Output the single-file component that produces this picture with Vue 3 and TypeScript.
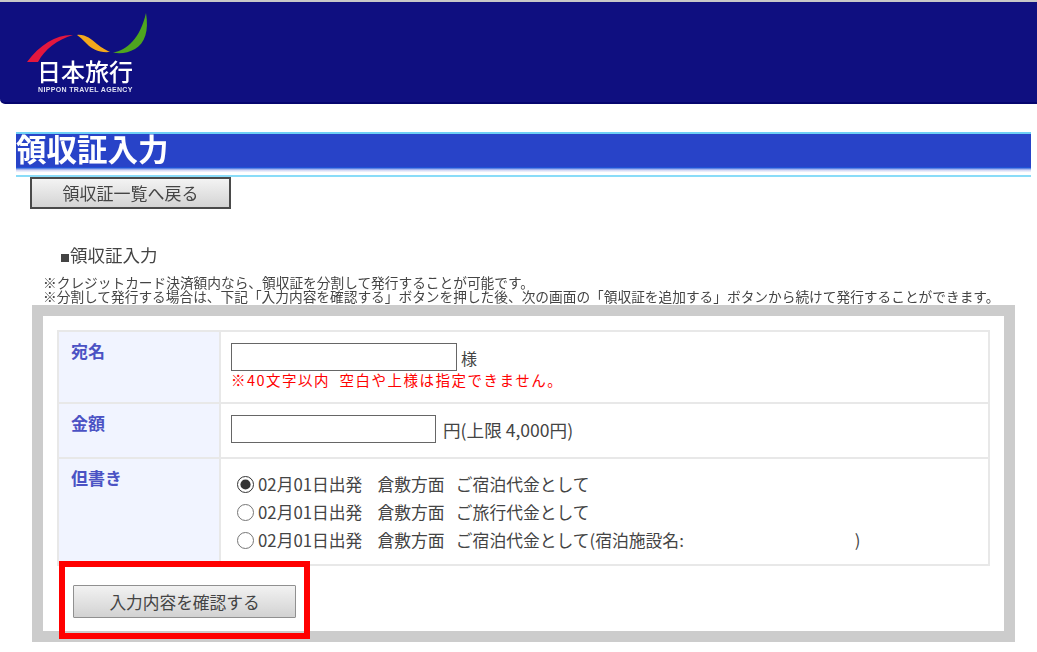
<script setup lang="ts">
interface Option { text: string; checked: boolean }
const options: Option[] = [
  { text: '02月01日出発    倉敷方面   ご宿泊代金として', checked: true },
  { text: '02月01日出発    倉敷方面   ご旅行代金として', checked: false },
  { text: '02月01日出発    倉敷方面   ご宿泊代金として(宿泊施設名:', checked: false },
]
</script>

<template>
  <div class="page">
    <header class="hero">
      <div class="logo">
        <svg class="logo-mark" width="130" height="62" viewBox="0 0 130 62">
          <path d="M0 49 C13 31 31 21 46 22 C30 27 18 36 11 49 Z" fill="#e3173e" />
          <path d="M50 22 C58 21 64 26 70 31 C75 35 79 37 83 39 C72 40 65 36 60 31 C56 27 53 24 50 22 Z" fill="#f3a81c" />
          <path d="M86 39.5 C100 37 113 26 119 0 C122 18 118 30 108 36 C101 40 93 41 86 39.5 Z" fill="#4ea51f" />
        </svg>
        <div class="logo-name">日本旅行</div>
        <div class="logo-sub">NIPPON TRAVEL AGENCY</div>
      </div>
    </header>

    <h1 class="title">領収証入力</h1>
    <button class="back" type="button">領収証一覧へ戻る</button>

    <h2 class="section"><span class="bullet">■</span>領収証入力</h2>
    <p class="notes">※クレジットカード決済額内なら、領収証を分割して発行することが可能です。<br />※分割して発行する場合は、下記「入力内容を確認する」ボタンを押した後、次の画面の「領収証を追加する」ボタンから続けて発行することができます。</p>

    <div class="box">
      <table class="form">
        <tbody>
          <tr class="r1">
            <th>宛名</th>
            <td>
              <div class="line"><input class="name" type="text" /><span class="suffix">様</span></div>
              <div class="warn">※40文字以内&nbsp;&nbsp;空白や上様は指定できません。</div>
            </td>
          </tr>
          <tr class="r2">
            <th>金額</th>
            <td>
              <div class="line"><input class="amount" type="text" /><span class="limit">円(上限 4,000円)</span></div>
            </td>
          </tr>
          <tr class="r3">
            <th>但書き</th>
            <td>
              <label v-for="(o, i) in options" :key="i" class="opt">
                <input type="radio" name="memo" :checked="o.checked" />
                <span>{{ o.text }}</span>
                <span v-if="i === 2" class="close">)</span>
              </label>
            </td>
          </tr>
        </tbody>
      </table>
      <button class="confirm" type="button">入力内容を確認する</button>
      <div class="mark"></div>
    </div>
  </div>
</template>

<style>
html, body { margin: 0; background: #fff; }
</style>

<style scoped>
.page {
  width: 1037px;
  height: 652px;
  overflow: hidden;
  position: relative;
  color: #444;
  font-family: "Noto Sans CJK JP", "Noto Sans", sans-serif;
  border-top: 2px solid #c8c8c8;
  box-sizing: border-box;
  filter: blur(0.4px);
}
.hero {
  height: 102px;
  box-sizing: border-box;
  background: #0f0f80;
  border-bottom: 2px solid #05056e;
  border-radius: 0 0 0 5px;
  padding: 11px 0 0 27px;
}
.logo { position: relative; width: 130px; height: 85px; color: #fff; }
.logo-mark { display: block; }
.logo-name {
  position: absolute;
  left: 10px;
  top: 43px;
  font-size: 24px;
  line-height: 30px;
  font-weight: 500;
  letter-spacing: 0;
  white-space: nowrap;
}
.logo-sub {
  position: absolute;
  left: 11px;
  top: 73px;
  font-family: "Liberation Sans", sans-serif;
  font-size: 7px;
  line-height: 7px;
  font-weight: 700;
  letter-spacing: 0.35px;
  white-space: nowrap;
  color: #dfe0f2;
}
.title {
  box-sizing: border-box;
  margin: 28px 6px 0 16px;
  height: 45px;
  padding: 0;
  background: linear-gradient(#2843c8 0 80%, #1e55d8 82%, #cfd4f4 88%, #fff 94%);
  border-top: 2px solid #6fd0f5;
  border-bottom: 2px solid #8adcf8;
  color: #fff;
  font-size: 30.5px;
  line-height: 28px;
  font-weight: 700;
}
.back {
  display: block;
  box-sizing: border-box;
  margin: 0 0 0 30px;
  width: 201px;
  height: 32px;
  background: linear-gradient(#f3f3f3, #d4d4d4);
  border: 2px solid #4a4a4a;
  border-radius: 0;
  color: #444;
  font: 400 17px/26px "Noto Sans CJK JP", sans-serif;
  padding: 0;
}
.section {
  margin: 35px 0 0 60px;
  font-size: 17.5px;
  line-height: 22px;
  font-weight: 400;
  color: #444;
}
.bullet { font-size: 10px; }
.notes {
  margin: 6px 0 2px 43px;
  font-size: 13.7px;
  line-height: 14px;
  white-space: nowrap;
  color: #444;
}
.box {
  position: relative;
  box-sizing: border-box;
  margin: 0 0 0 32px;
  width: 983px;
  height: 337px;
  border: 11px solid #cccccc;
  padding: 14px 14px 0;
  background: #fff;
}
.form {
  border-collapse: collapse;
  width: 933px;
  table-layout: fixed;
}
.form th, .form td {
  border: 2px solid #e8e8e8;
  vertical-align: top;
  padding: 0;
}
.form th {
  width: 162px;
  box-sizing: border-box;
  background: #f1f4ff;
  color: #4b52c4;
  font-size: 17px;
  line-height: 22px;
  font-weight: 700;
  text-align: left;
  padding: 8px 0 0 12px;
}
.form td { padding-left: 10px; font-size: 16px; color: #444; }
.r1 { height: 72px; }
.r2 { height: 55px; }
.r3 { height: 107px; }
.line { display: flex; align-items: flex-end; padding-top: 11px; }
.form input[type="text"] {
  box-sizing: border-box;
  height: 28px;
  border: 1px solid #666;
  background: #fff;
  margin: 0;
  padding: 0;
  display: block;
}
.name { width: 226px; }
.amount { width: 205px; }
.suffix { margin-left: 4px; line-height: 26px; }
.limit { margin-left: 7px; line-height: 26px; font-size: 17.6px; }
.warn {
  color: #f00;
  font-size: 14.5px;
  line-height: 18px;
  letter-spacing: 1.5px;
  white-space: nowrap;
}
.r3 td { padding-top: 11px; }
.opt {
  display: flex;
  align-items: center;
  height: 28px;
  white-space: pre;
  font-size: 16.8px;
}
.opt input {
  width: 17px;
  height: 17px;
  margin: 0 4px 0 6px;
  accent-color: #333;
}
.close { margin-left: 171px; }
.confirm {
  display: block;
  box-sizing: border-box;
  margin: 19px 0 0 16px;
  width: 223px;
  height: 33px;
  background: linear-gradient(#f2f2f2, #d2d2d2);
  border: 1px solid #909090;
  border-radius: 1px;
  color: #444;
  font: 400 16.7px/28px "Noto Sans CJK JP", sans-serif;
  padding: 0;
}
.mark {
  position: absolute;
  left: 16px;
  top: 245px;
  box-sizing: border-box;
  width: 251px;
  height: 78px;
  border: 6px solid #ff0000;
}
</style>
